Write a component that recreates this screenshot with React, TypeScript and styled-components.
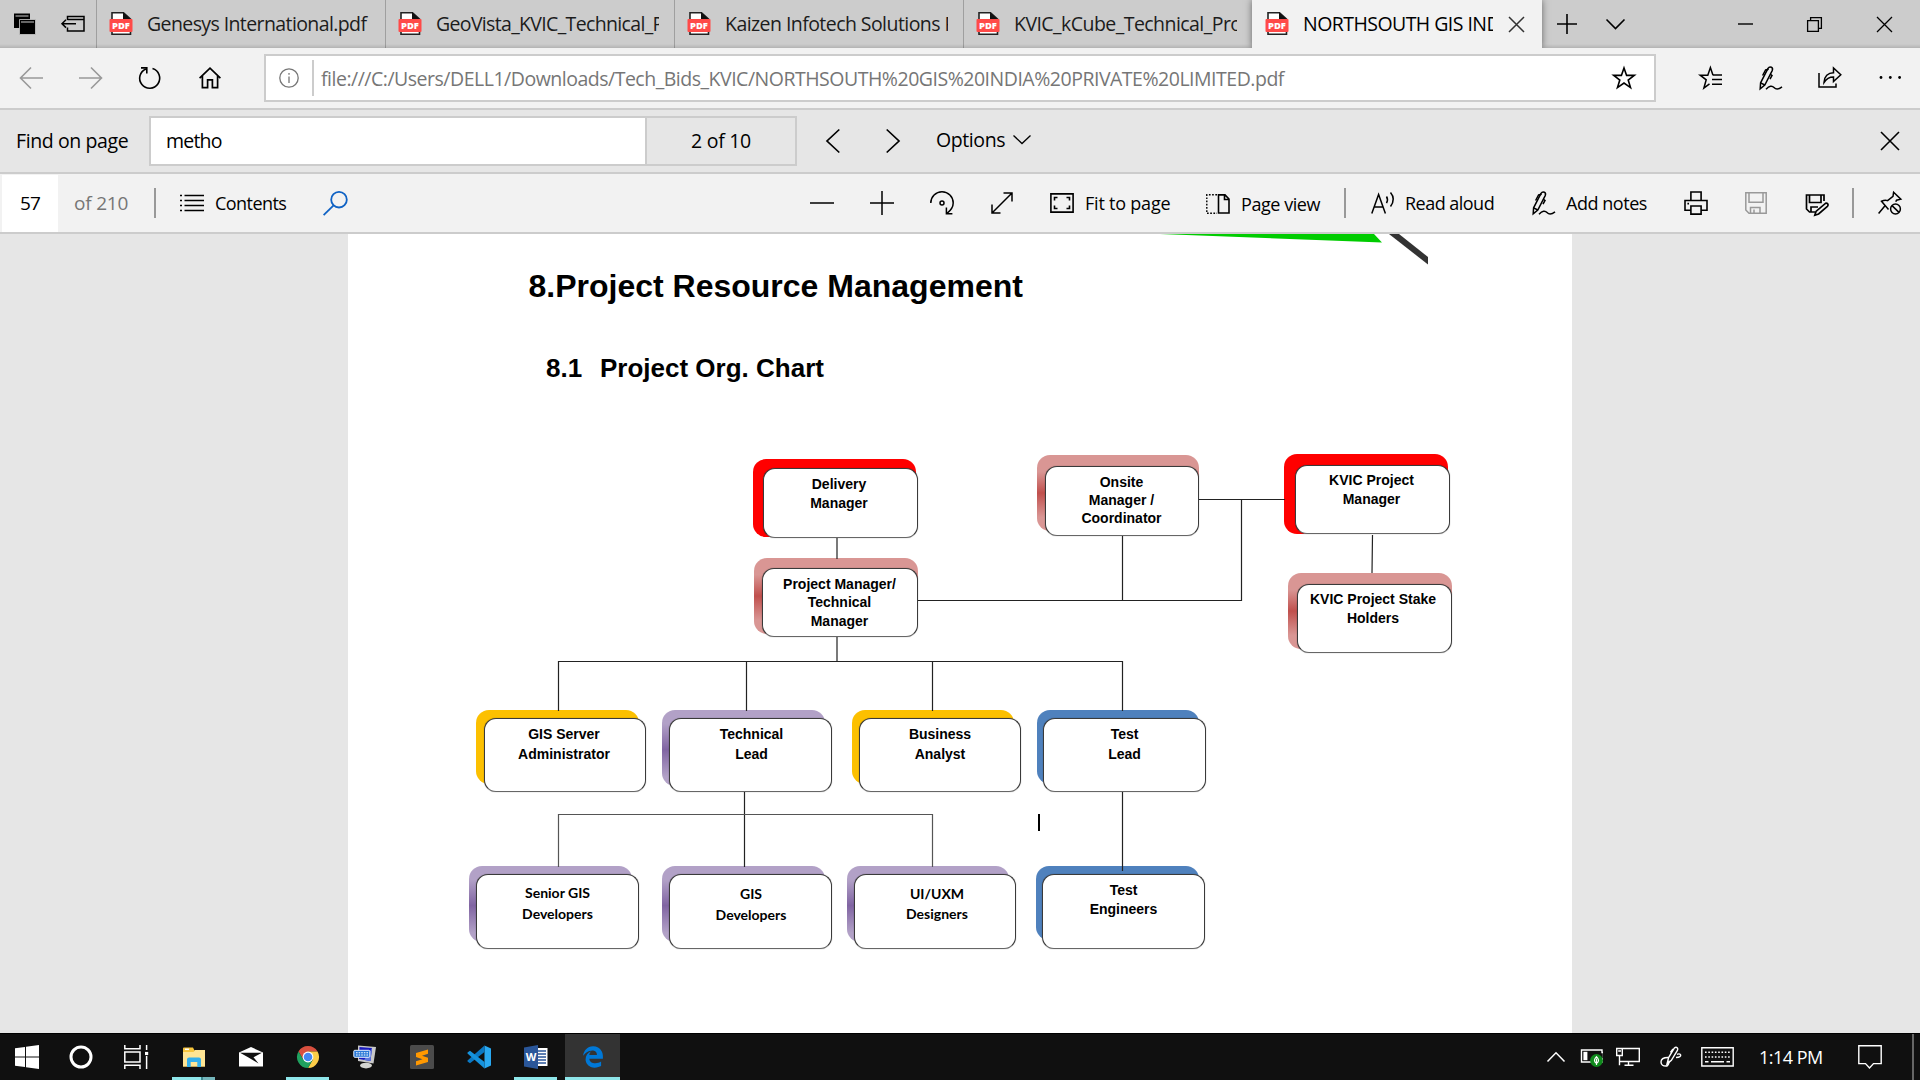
import React from 'react';
import styled, { createGlobalStyle, css } from 'styled-components';
import { FaEdgeLegacy } from 'react-icons/fa6';

const UI_FONT = '"Open Sans", "Noto Sans", sans-serif';
const DOC_FONT = '"Liberation Sans", Arial, sans-serif';

const GlobalStyle = createGlobalStyle`
  * { box-sizing: border-box; }
  body { margin: 0; background: #e6e6e6; overflow: hidden; }
  svg { display: block; flex: none; }
`;

const Screen = styled.div`
  width: 1920px;
  height: 1080px;
  display: flex;
  flex-direction: column;
  overflow: hidden;
  font-family: ${UI_FONT};
  color: #000;
  white-space: nowrap;
`;

/* ---------- shared pieces ---------- */

const Cell = styled.div<{ $w: number }>`
  width: ${(p) => p.$w}px;
  flex: none;
  height: 100%;
  display: flex;
  align-items: center;
  justify-content: center;
`;

const Spacer = styled.div`
  flex: 1;
`;

const Stroke = styled.svg<{ $c?: string; $sw?: number }>`
  fill: none;
  stroke: ${(p) => p.$c ?? '#000'};
  stroke-width: ${(p) => p.$sw ?? 1.5};
  overflow: visible;
`;

const VLine = styled.div<{ $h: number; $c: string; $ml?: number; $mr?: number }>`
  width: 2px;
  flex: none;
  height: ${(p) => p.$h}px;
  background: ${(p) => p.$c};
  margin-left: ${(p) => p.$ml ?? 0}px;
  margin-right: ${(p) => p.$mr ?? 0}px;
`;

/* ---------- tab strip ---------- */

const TabStrip = styled.div`
  height: 48px;
  flex: none;
  display: flex;
  background: #ccc;
`;

const Tab = styled.div<{ $active?: boolean }>`
  width: 289px;
  flex: none;
  display: flex;
  align-items: center;
  padding: 0 15px 0 12px;
  border-left: 1px solid #9f9f9f;
  ${(p) =>
    p.$active &&
    css`
      width: 290px;
      border-left-color: #f2f2f2;
      background: #f2f2f2;
      box-shadow: 0 0 7px rgba(0, 0, 0, 0.5);
      z-index: 1;
    `}
`;

const TabTitle = styled.span<{ $ls: number; $active?: boolean }>`
  margin-left: 14px;
  flex: 1;
  min-width: 0;
  overflow: hidden;
  font-size: 19.5px;
  line-height: 47px;
  height: 48px;
  letter-spacing: ${(p) => p.$ls}px;
  color: ${(p) => (p.$active ? '#000' : '#1c1c1c')};
`;

const TabClose = styled.div`
  width: 35px;
  margin-right: -1px;
  padding-left: 16px;
`;

/* ---------- navigation bar ---------- */

const NavBar = styled.div`
  height: 62px;
  flex: none;
  display: flex;
  align-items: center;
  padding-left: 1px;
  background: #f2f2f2;
  border-bottom: 2px solid #ccc;
  position: relative;
  z-index: 2;
`;

const StripShade = styled.div`
  height: 4px;
  margin-top: -4px;
  flex: none;
  background: linear-gradient(rgba(0, 0, 0, 0), rgba(0, 0, 0, 0.12));
`;

const Address = styled.div`
  width: 1392px;
  height: 48px;
  margin-left: 24px;
  flex: none;
  display: flex;
  align-items: center;
  background: #fff;
  border: 2px solid #ccc;
`;

const Url = styled.span`
  flex: 1;
  margin-left: 7px;
  font-size: 19.5px;
  letter-spacing: -0.49px;
  line-height: 45px;
  color: #767676;
`;

/* ---------- find bar ---------- */

const FindBar = styled.div`
  height: 64px;
  flex: none;
  display: flex;
  align-items: center;
  background: #e6e6e6;
  border-bottom: 2px solid #ccc;
  font-size: 19.5px;
  letter-spacing: -0.4px;
`;

const FindLabel = styled.span`
  width: 149px;
  padding: 0 0 1px 16px;
`;

const FindInput = styled.div`
  width: 498px;
  height: 50px;
  padding-left: 15px;
  line-height: 46px;
  letter-spacing: -0.8px;
  background: #fff;
  border: 2px solid #ccc;
`;

const FindCount = styled.div`
  width: 150px;
  height: 50px;
  line-height: 46px;
  text-align: center;
  letter-spacing: -0.3px;
  border: 2px solid #ccc;
  border-left: none;
`;

const FindOptions = styled.div`
  display: flex;
  align-items: center;
  gap: 8px;
  margin-left: 18px;
  padding-bottom: 4px;
`;

/* ---------- document toolbar ---------- */

const ToolBar = styled.div`
  height: 60px;
  flex: none;
  display: flex;
  align-items: center;
  background: #f2f2f2;
  border-bottom: 2px solid #ccc;
`;

const PageBox = styled.div`
  width: 56px;
  height: 57px;
  margin: 1px 0 0 2px;
  text-align: center;
  line-height: 57px;
  font-size: 19px;
  letter-spacing: -0.8px;
  background: #fff;
`;

const PageTotal = styled.span`
  width: 80px;
  margin-left: 16px;
  font-size: 19px;
  letter-spacing: -0.2px;
  color: #767676;
`;

const Tool = styled.div<{ $w: number; $pad?: number; $gap?: number; $ls?: number; $drop?: number }>`
  width: ${(p) => p.$w}px;
  padding-left: ${(p) => p.$pad ?? 0}px;
  padding-top: ${(p) => p.$drop ?? 0}px;
  flex: none;
  display: flex;
  align-items: center;
  gap: ${(p) => p.$gap ?? 11}px;
  font-size: 18px;
  letter-spacing: ${(p) => p.$ls ?? -0.45}px;
`;

/* ---------- document ---------- */

const Viewport = styled.div`
  flex: 1;
  min-height: 0;
  overflow: hidden;
  display: flex;
  padding-left: 348px;
  background: #e6e6e6;
`;

const Sheet = styled.div`
  position: relative;
  width: 1224px;
  height: 800px;
  padding-top: 32px;
  background: #fff;
  font-family: ${DOC_FONT};
`;

const Letterhead = styled.svg`
  position: absolute;
  left: 800px;
  top: 0;
`;

const H1 = styled.h1`
  margin: 0 0 46px 180.5px;
  font-size: 32px;
  line-height: 40px;
  font-weight: bold;
`;

const H2 = styled.h2`
  margin: 0 0 36px 198px;
  display: flex;
  font-size: 26px;
  line-height: 32px;
  font-weight: bold;
`;

const H2Number = styled.span`
  width: 54px;
`;

/* Org chart canvas; node and connector coordinates share the window's origin. */
const OX = 348;
const OY = 420;

const Chart = styled.div`
  position: relative;
  width: 1224px;
  height: 613px;
`;

const Connectors = styled.svg`
  position: absolute;
  left: 0;
  top: 0;
  fill: none;
  stroke: #222;
  stroke-width: 1.2;
`;

type Tone = 'red' | 'rose' | 'amber' | 'violet' | 'blue';
const TONES: Record<Tone, string> = {
  red: '#ff0000',
  rose: 'linear-gradient(#d99694 22%, #c0504d 50%, #d99694 82%)',
  amber: '#fcc000',
  violet: 'linear-gradient(#b2a1c7 18%, #8064a2 52%, #b2a1c7 88%)',
  blue: '#4f81bd',
};

const Back = styled.div<{ $x: number; $y: number; $w: number; $h: number; $tone: Tone }>`
  position: absolute;
  left: ${(p) => p.$x - OX}px;
  top: ${(p) => p.$y - OY}px;
  width: ${(p) => p.$w}px;
  height: ${(p) => p.$h}px;
  border-radius: 13px;
  background: ${(p) => TONES[p.$tone]};
`;

const Front = styled.div<{ $x: number; $y: number; $w: number; $h: number }>`
  position: absolute;
  left: ${(p) => p.$x - OX}px;
  top: ${(p) => p.$y - OY}px;
  width: ${(p) => p.$w}px;
  height: ${(p) => p.$h}px;
  border-radius: 12px;
  border: 1px solid #3a3a3a;
  border-bottom-color: #666;
  background: #fff;
  box-shadow: 0 0 1px rgba(0, 0, 0, 0.5);
`;

const Label = styled.div<{ $cx: number; $base: number; $lh: number; $humanist?: boolean }>`
  position: absolute;
  left: ${(p) => p.$cx - OX - 80}px;
  top: ${(p) => p.$base - OY - p.$lh / 2 - 5}px;
  width: 160px;
  text-align: center;
  font-weight: bold;
  font-size: 14px;
  line-height: ${(p) => p.$lh}px;
  ${(p) =>
    p.$humanist &&
    css`
      font-family: Lato, "Open Sans", sans-serif;
    `}
`;

const Caret = styled.div`
  position: absolute;
  left: ${1038 - OX}px;
  top: ${814 - OY}px;
  width: 2px;
  height: 17px;
  background: #000;
`;

interface OrgNode {
  tone: Tone;
  back: [number, number, number, number];
  front: [number, number, number, number];
  cx: number;
  base: number;
  lh: number;
  lines: string[];
  humanist?: boolean;
}

const NODES: OrgNode[] = [
  { tone: 'red', back: [753, 459, 163, 78], front: [763, 468, 155, 70], cx: 839, base: 489.5, lh: 19.2, lines: ['Delivery', 'Manager'] },
  { tone: 'rose', back: [754, 558, 164, 76], front: [762, 568, 156, 69], cx: 839.5, base: 589, lh: 18.4, lines: ['Project Manager/', 'Technical', 'Manager'] },
  { tone: 'rose', back: [1037, 455, 162, 76], front: [1045, 466, 154, 70], cx: 1121.5, base: 488, lh: 17.7, lines: ['Onsite', 'Manager /', 'Coordinator'] },
  { tone: 'red', back: [1284, 454, 164, 80], front: [1295, 465, 155, 69], cx: 1371.5, base: 485.5, lh: 19.7, lines: ['KVIC Project', 'Manager'] },
  { tone: 'rose', back: [1288, 573, 164, 76], front: [1297, 584, 155, 69], cx: 1373, base: 604.5, lh: 18.3, lines: ['KVIC Project Stake', 'Holders'] },
  { tone: 'amber', back: [476, 710, 163, 74], front: [484, 718, 162, 74], cx: 564, base: 739, lh: 20.3, lines: ['GIS Server', 'Administrator'] },
  { tone: 'violet', back: [662, 710, 163, 76], front: [669, 718, 163, 74], cx: 751.5, base: 739, lh: 20.3, lines: ['Technical', 'Lead'] },
  { tone: 'amber', back: [852, 710, 162, 74], front: [859, 718, 162, 74], cx: 940, base: 739, lh: 20.3, lines: ['Business', 'Analyst'] },
  { tone: 'blue', back: [1037, 710, 162, 74], front: [1043, 718, 163, 74], cx: 1124.5, base: 739, lh: 20.3, lines: ['Test', 'Lead'] },
  { tone: 'violet', back: [469, 866, 163, 76], front: [476, 874, 163, 75], cx: 557.5, base: 898.5, lh: 20.3, lines: ['Senior GIS', 'Developers'], humanist: true },
  { tone: 'violet', back: [662, 866, 163, 76], front: [669, 874, 163, 75], cx: 751, base: 898, lh: 21, lines: ['GIS', 'Developers'], humanist: true },
  { tone: 'violet', back: [847, 866, 162, 76], front: [854, 874, 162, 75], cx: 937, base: 898.5, lh: 20, lines: ['UI/UXM', 'Designers'], humanist: true },
  { tone: 'blue', back: [1036, 866, 163, 74], front: [1042, 874, 163, 75], cx: 1123.5, base: 895.8, lh: 19.3, lines: ['Test', 'Engineers'] },
];

/* ---------- taskbar ---------- */

const TaskBar = styled.div`
  height: 47px;
  flex: none;
  display: flex;
  align-items: center;
  background: #101010;
  border-top: 1px solid #000;
`;

const AppCell = styled.div<{ $open?: boolean; $active?: boolean; $stack?: boolean }>`
  width: 57px;
  height: 46px;
  flex: none;
  display: flex;
  flex-direction: column;
  align-items: center;
  justify-content: center;
  padding-top: 3px;
  &::after {
    content: '';
    width: ${(p) => (p.$active ? 55 : 43)}px;
    height: 3px;
    margin-top: auto;
    background: ${(p) =>
      p.$stack
        ? 'linear-gradient(90deg, #8ee6ea 29px, #3f8a90 29px, #3f8a90 31px, #74b6bb 31px)'
        : p.$open || p.$active
          ? '#8ee6ea'
          : 'transparent'};
  }
  & > svg {
    margin-top: auto;
  }
  ${(p) =>
    p.$active &&
    css`
      width: 55px;
      margin-left: 1px;
      background: #333;
    `}
`;

const Tray = styled.div`
  display: flex;
  align-items: center;
  height: 100%;
`;

const Clock = styled.span`
  width: 64px;
  margin: 0 35px 0 25px;
  font-size: 18px;
  letter-spacing: -0.5px;
  color: #fff;
`;

/* ---------- icons ---------- */

const PdfIcon = () => (
  <svg width="24" height="26" viewBox="0 0 24 26">
    <path d="M3 1.7H14.5L21.5 8V23.3H3Z" fill="#fff" stroke="#222" strokeWidth="1.6" />
    <path d="M14 1V8.5H22Z" fill="#111" />
    <rect x="0.5" y="8" width="23" height="13" rx="1" fill="#ff4a48" />
    <text x="12" y="18.2" textAnchor="middle" fontFamily="Open Sans, sans-serif" fontWeight="800" fontSize="9.4" fill="#fff">PDF</text>
  </svg>
);

const CloseIcon = ({ s, w = 1.4, c = '#000' }: { s: number; w?: number; c?: string }) => (
  <Stroke width={s} height={s} viewBox={`0 0 ${s} ${s}`} $sw={w} $c={c}>
    <path d={`M0 0L${s} ${s}M${s} 0L0 ${s}`} />
  </Stroke>
);

const ArrowIcon = ({ flip }: { flip?: boolean }) => (
  <Stroke width="23" height="22" viewBox="0 0 23 22" $c="#999" $sw={1.6}>
    {flip ? <path d="M0 11H22.5M12 0.5L22.5 11L12 21.5" /> : <path d="M23 11H0.5M11 0.5L0.5 11L11 21.5" />}
  </Stroke>
);

const PenIcon = ({ c }: { c?: string }) => (
  <Stroke width="24" height="24" viewBox="0 0 24 24" $c={c}>
    <path d="M1.2 22.8L1.6 16.8L9 2.4Q10.3 0.3 12.3 1.2Q14.2 2.4 13.2 4.6L5.8 19Z" />
    <path d="M1.6 16.8L5.8 19M3.6 9.5L6.6 4L9.6 3.2M11.4 8.4L13 9.4L11 13.2" />
    <path d="M7 23.2Q12 18.2 15 21.5T23 20.8" />
  </Stroke>
);

const ChevronIcon = ({ w, h, d, c = '#000', sw = 1.5 }: { w: number; h: number; d: string; c?: string; sw?: number }) => (
  <Stroke width={w} height={h} viewBox={`0 0 ${w} ${h}`} $c={c} $sw={sw}>
    <path d={d} />
  </Stroke>
);

const TABS = [
  { title: 'Genesys International.pdf', ls: -0.6 },
  { title: 'GeoVista_KVIC_Technical_P', ls: -0.66 },
  { title: 'Kaizen Infotech Solutions P', ls: -0.56 },
  { title: 'KVIC_kCube_Technical_Pro', ls: -0.55 },
];

export default function App() {
  return (
    <Screen>
      <GlobalStyle />

      <TabStrip>
        <Cell $w={50}>
          <svg width="22" height="22" viewBox="0 0 22 22">
            <path d="M0 0.5H16V15H0Z" fill="#000" />
            <path d="M1.5 3H14.5" stroke="#ccc" />
            <path d="M5.5 6.5H21.5V21.5H5.5Z" fill="#000" stroke="#ccc" strokeWidth="0.8" />
            <path d="M7 9H20" stroke="#ccc" />
          </svg>
        </Cell>
        <Cell $w={46}>
          <Stroke width="24" height="18" viewBox="0 0 24 18" $sw={1.5}>
            <path d="M6.5 5V1.5H23V16H6.5V12.5M6.5 4.5H23M1 8.7H15M5 4.8L1 8.7L5 12.6" />
          </Stroke>
        </Cell>
        {TABS.map((t) => (
          <Tab key={t.title}>
            <PdfIcon />
            <TabTitle $ls={t.ls}>{t.title}</TabTitle>
          </Tab>
        ))}
        <Tab $active>
          <PdfIcon />
          <TabTitle $ls={-0.55} $active>NORTHSOUTH GIS IND</TabTitle>
          <TabClose>
            <CloseIcon s={15} w={1.5} c="#333" />
          </TabClose>
        </Tab>
        <Cell $w={50}>
          <Stroke width="20" height="20" viewBox="0 0 20 20" $sw={1.6}><path d="M10 0V20M0 10H20" /></Stroke>
        </Cell>
        <Cell $w={47}>
          <ChevronIcon w={19} h={10} d="M0.5 0.5L9.5 9.5L18.5 0.5" sw={1.6} />
        </Cell>
        <Spacer />
        <Cell $w={69}>
          <Stroke width="15" height="2" viewBox="0 0 15 2" $sw={1.4}><path d="M0 1H15" /></Stroke>
        </Cell>
        <Cell $w={69}>
          <Stroke width="15" height="15" viewBox="0 0 15 15" $sw={1.3}>
            <path d="M0.6 3.6H11.4V14.4H0.6ZM3.6 3.6V0.6H14.4V11.4H11.4" />
          </Stroke>
        </Cell>
        <Cell $w={71}>
          <CloseIcon s={15} w={1.3} />
        </Cell>
      </TabStrip>
      <StripShade />

      <NavBar>
        <Cell $w={60}><ArrowIcon /></Cell>
        <Cell $w={59}><ArrowIcon flip /></Cell>
        <Cell $w={60}>
          <Stroke width="22" height="22" viewBox="0 0 22 22" $sw={1.6}>
            <path d="M13.5 1.6A10 10 0 1 1 7 1.9" />
            <path d="M2 0.9H7.8V6.6" />
          </Stroke>
        </Cell>
        <Cell $w={60}>
          <Stroke width="22" height="22" viewBox="0 0 22 22" $sw={1.7}>
            <path d="M0.6 11.2L11 1.2L21.4 11.2M3.4 9V20.6H8.6V12.8H13.4V20.6H18.6V9" />
          </Stroke>
        </Cell>
        <Address>
          <Cell $w={46}>
            <Stroke width="20" height="20" viewBox="0 0 20 20" $c="#767676" $sw={1.3}>
              <circle cx="10" cy="10" r="9.2" />
              <path d="M10 8.4V15M10 5V6.8" />
            </Stroke>
          </Cell>
          <VLine $h={36} $c="#ccc" />
          <Url>file:///C:/Users/DELL1/Downloads/Tech_Bids_KVIC/NORTHSOUTH%20GIS%20INDIA%20PRIVATE%20LIMITED.pdf</Url>
          <Cell $w={60}>
            <Stroke width="24" height="24" viewBox="0 0 24 24" $sw={1.6}>
              <path d="M12 2L14.6 9.4H22.3L16.2 14L18.5 21.6L12 17L5.5 21.6L7.8 14L1.7 9.4H9.4Z" />
            </Stroke>
          </Cell>
        </Address>
        <Spacer />
        <Cell $w={60}>
          <Stroke width="24" height="24" viewBox="0 0 24 24">
            <path d="M14 9H23M13 13.6H23M13 18.2H23" />
            <path d="M14 9.2L11.4 1.6L8.8 9.2H1.2L7.2 13.8L4.9 22L10.5 17.8" />
          </Stroke>
        </Cell>
        <Cell $w={59}><PenIcon /></Cell>
        <Cell $w={60}>
          <Stroke width="24" height="24" viewBox="0 0 24 24">
            <path d="M1 7V21H18V17.5" />
            <path d="M6 16.5C6.2 10.5 10 6.7 15.5 6.7V2L22.8 8.8L15.5 15.6V11C11 11 8.4 12.6 6 16.5Z" />
          </Stroke>
        </Cell>
        <Cell $w={60}>
          <svg width="23" height="6" viewBox="0 0 23 6">
            <circle cx="2" cy="2.5" r="1.4" /><circle cx="11.3" cy="2.5" r="1.4" /><circle cx="20.6" cy="2.5" r="1.4" />
          </svg>
        </Cell>
      </NavBar>

      <FindBar>
        <FindLabel>Find on page</FindLabel>
        <FindInput>metho</FindInput>
        <FindCount>2 of 10</FindCount>
        <Cell $w={71}><ChevronIcon w={14} h={24} d="M13.3 0.5L1 12L13.3 23.5" sw={1.7} /></Cell>
        <Cell $w={50}><ChevronIcon w={14} h={24} d="M0.7 0.5L13 12L0.7 23.5" sw={1.7} /></Cell>
        <FindOptions>
          Options
          <ChevronIcon w={18} h={9} d="M0.5 0.5L9 8.5L17.5 0.5" sw={1.3} />
        </FindOptions>
        <Spacer />
        <Cell $w={60}><CloseIcon s={18} w={1.6} /></Cell>
      </FindBar>

      <ToolBar>
        <PageBox>57</PageBox>
        <PageTotal>of 210</PageTotal>
        <VLine $h={30} $c="#999" $mr={24} />
        <Tool $w={143} $ls={-0.55}>
          <Stroke width="24" height="18" viewBox="0 0 24 18">
            <path d="M4.5 1.5H24M4.5 6.5H24M4.5 11.5H24M4.5 16.5H24" />
            <path d="M0 1.5H2M0 6.5H2M0 11.5H2M0 16.5H2" />
          </Stroke>
          Contents
        </Tool>
        <Stroke width="25" height="25" viewBox="0 0 25 25" $c="#0f62c4" $sw={1.8}>
          <circle cx="16" cy="8.7" r="7.8" />
          <path d="M10.6 14.3L0.6 24.2" />
        </Stroke>
        <Spacer />
        <Cell $w={60}><Stroke width="24" height="24" viewBox="0 0 24 24"><path d="M0 12H24" /></Stroke></Cell>
        <Cell $w={60}><Stroke width="24" height="24" viewBox="0 0 24 24"><path d="M0 12H24M12 0V24" /></Stroke></Cell>
        <Cell $w={60}>
          <Stroke width="24" height="24" viewBox="0 0 24 24">
            <path d="M0.8 12A11.2 11.2 0 0 1 23.2 12C23.2 16.5 20.5 19.6 17 22.4M16.4 16.4V22.8H22.4" />
            <circle cx="12" cy="12" r="2" />
          </Stroke>
        </Cell>
        <Cell $w={60}>
          <Stroke width="22" height="22" viewBox="0 0 22 22">
            <path d="M1 21L21 1M12.5 1H21V9.5M1 12.5V21H9.5" />
          </Stroke>
        </Cell>
        <Tool $w={174} $pad={18} $ls={-0.22}>
          <Stroke width="24" height="20" viewBox="0 0 24 20" $sw={1.6}>
            <path d="M0.9 0.9H23.1V19.1H0.9Z" />
            <path d="M4.5 7.5V4.5H7.5M16.5 4.5H19.5V7.5M19.5 12.5V15.5H16.5M7.5 15.5H4.5V12.5" />
          </Stroke>
          Fit to page
        </Tool>
        <Tool $w={138} $drop={2}>
          <Stroke width="24" height="20" viewBox="0 0 24 20" $sw={1.6}>
            <path d="M12.5 0.9H19L23 5V19H12.5ZM18.5 1V5.5H23" />
            <path d="M11 0.8H0.8V19.2H11" strokeDasharray="1.7 1.5" strokeWidth="1.4" />
          </Stroke>
          Page view
        </Tool>
        <VLine $h={30} $c="#999" $mr={25} />
        <Tool $w={161} $gap={10} $ls={-0.52}>
          <Stroke width="24" height="24" viewBox="0 0 24 24">
            <path d="M0.8 22.5L7.6 3.5L14.4 22.5M3.2 16H12" />
            <path d="M15.5 5.5Q17.5 8.8 15.5 12.2M19.5 1.5Q25 8 19.5 15.5" />
          </Stroke>
          Read aloud
        </Tool>
        <Tool $w={134} $gap={10}>
          <PenIcon />
          Add notes
        </Tool>
        <Cell $w={60}>
          <Stroke width="24" height="24" viewBox="0 0 24 24" $sw={1.6}>
            <path d="M6.9 9.5V1H17.1V9.5M6.9 19.3H1V9.5H23V19.3H17.1M6.9 15H17.1V23.1H6.9ZM3.4 12.6H5" />
          </Stroke>
        </Cell>
        <Cell $w={60}>
          <Stroke width="22" height="22" viewBox="0 0 22 22" $c="#999">
            <path d="M0.8 0.8H21.2V21.2H4L0.8 18ZM4 1V10.3H18V1M5.5 21V15.5H15V21M9 17.5V21" />
          </Stroke>
        </Cell>
        <Cell $w={61}>
          <Stroke width="24" height="24" viewBox="0 0 24 24" $sw={1.7}>
            <path d="M19 10V4H1.5V18L4.5 21H10M4.5 4V11.5H16V4M6 21V16H13" />
            <path d="M9.8 24.2L11 20.4L20.4 12.4Q22.4 11.8 23 13.4Q23.2 14.6 22.4 15.4L13.6 23Z" />
          </Stroke>
        </Cell>
        <VLine $h={30} $c="#999" $ml={5} $mr={6} />
        <Cell $w={60}>
          <Stroke width="24" height="24" viewBox="0 0 24 24">
            <path d="M10.5 18.5L3.5 10.2Q7 8.6 9.6 9.6L15 5.4L15.6 1.2L22.8 8.2L18.5 9.2L17.8 10.8M7.2 14.6L0.6 22.6" />
            <circle cx="17.5" cy="18" r="4.9" />
            <path d="M14 14.6L21 21.4" />
          </Stroke>
        </Cell>
      </ToolBar>

      <Viewport>
        <Sheet>
          <Letterhead width="300" height="32" viewBox="0 0 300 32">
            <path d="M12 0H226L234 8.5Z" fill="#00cc00" />
            <path d="M241 0H251L280 23V30.5Z" fill="#333" />
          </Letterhead>
          <H1>8.Project Resource Management</H1>
          <H2>
            <H2Number>8.1</H2Number>
            Project Org. Chart
          </H2>
          <Chart>
            {NODES.map((n) => {
              const [bx, by, bw, bh] = n.back;
              return <Back key={bx + '-' + by} $x={bx} $y={by} $w={bw} $h={bh} $tone={n.tone} />;
            })}
            <Connectors width="1224" height="613" viewBox={`${OX} ${OY} 1224 613`}>
              <path d="M837 537V559M837 637V661M558.5 711V661.5H1122.5V711M746.5 661V711M932.5 661V711" />
              <path d="M918 600.5H1241.5V499.5M1198 499.5H1285M1122.5 533V600M1372.5 535L1372 573" />
              <path d="M744.5 791V867M1122.5 791V871" />
              <path d="M558.5 867V814.5H932.5V867" stroke="#555" />
            </Connectors>
            {NODES.map((n) => {
              const [fx, fy, fw, fh] = n.front;
              return <Front key={fx + '-' + fy} $x={fx} $y={fy} $w={fw} $h={fh} />;
            })}
            {NODES.map((n) => (
              <Label key={n.cx + '-' + n.base} $cx={n.cx} $base={n.base} $lh={n.lh} $humanist={n.humanist}>
                {n.lines.map((l) => (
                  <div key={l}>{l}</div>
                ))}
              </Label>
            ))}
            <Caret />
          </Chart>
        </Sheet>
      </Viewport>

      <TaskBar>
        <Cell $w={54}>
          <svg width="24" height="24" viewBox="0 0 24 24" fill="#fff">
            <path d="M0 3.3L10 1.9V11.4H0ZM11 1.7L24 0V11.4H11ZM0 12.5H10V22L0 20.7ZM11 12.5H24V24L11 22.3Z" />
          </svg>
        </Cell>
        <Cell $w={54}>
          <Stroke width="24" height="24" viewBox="0 0 24 24" $c="#fff" $sw={3}><circle cx="12" cy="12" r="10" /></Stroke>
        </Cell>
        <Cell $w={57}>
          <Stroke width="26" height="24" viewBox="0 0 26 24" $c="#fff">
            <path d="M0.8 0V3.8H16V0M0.8 7H16V17H0.8ZM0.8 24V20.2H16V24M22.6 0V5M22.6 11V24" />
            <path d="M21 8.5H24.2" strokeWidth="3.2" />
          </Stroke>
        </Cell>
        <AppCell $stack>
          <svg width="24" height="24" viewBox="0 0 24 24">
            <path d="M1 3.5Q1 2.5 2 2.5H11L12.5 5.5H23V21.5H1Z" fill="#f8c63c" />
            <path d="M3 4.3H7" stroke="#fff" strokeWidth="1.5" />
            <path d="M1 7H11.5L13 5H23V21.5H1Z" fill="#ffe594" />
            <path d="M5 22V14.5Q5 12.5 7 12.5H17Q19 12.5 19 14.5V22H15.3V17H8.7V22Z" fill="#35b0ec" />
          </svg>
        </AppCell>
        <AppCell>
          <svg width="24" height="24" viewBox="0 0 24 24">
            <path d="M0 7.5L12 2L24 7.5V21.5H0Z" fill="#fff" />
            <path d="M1 7.8H23L14.5 12.2L19.5 18.5L9.5 12.5Z" fill="#101010" />
          </svg>
        </AppCell>
        <AppCell $open>
          <svg width="24" height="24" viewBox="0 0 24 24">
            <path d="M2.47 6.5A11 11 0 0 1 21.53 6.5H12L7.2 14.5Z" fill="#d9503f" />
            <path d="M21.53 6.5A11 11 0 0 1 12 23L16.8 14.5L12 6.5Z" fill="#fccd48" />
            <path d="M12 23A11 11 0 0 1 2.47 6.5L7.2 14.5H16.8Z" fill="#1fa15f" />
            <circle cx="12" cy="12" r="5.4" fill="#fff" />
            <circle cx="12" cy="12" r="4.3" fill="#4587f3" />
          </svg>
        </AppCell>
        <AppCell>
          <svg width="24" height="24" viewBox="0 0 24 24">
            <path d="M5 0.5L23 2L20.5 18.5L5 16Z" fill="#c8c8c8" />
            <path d="M6.5 2L19 3L17.5 16L6 14Z" fill="#1919bd" />
            <path d="M19 3L17.5 16L11 15Z" fill="#5d78de" />
            <ellipse cx="13" cy="20.6" rx="6" ry="2.8" fill="#d4d4d0" />
            <rect x="0.8" y="5.3" width="16" height="7" rx="1" fill="#2878d8" stroke="#e8f2ff" />
            <path d="M3 7.7H15M3 10H15" stroke="#fff" strokeWidth="1.1" strokeDasharray="1.6 1" />
          </svg>
        </AppCell>
        <AppCell>
          <svg width="24" height="24" viewBox="0 0 24 24">
            <rect width="24" height="24" rx="1.5" fill="#4b4b4b" />
            <path d="M18 4.5V8.7L12 10.7L18 12.7V17L6 20.5V16.3L12.5 14.2L6 12V8Z" fill="#ff9800" />
          </svg>
        </AppCell>
        <AppCell>
          <svg width="24" height="24" viewBox="0 0 24 24">
            <path d="M17.5 0.5L24 3.5V20.5L17.5 23.5Z" fill="#29a9f2" />
            <path d="M17.5 0.5V7L3 18.2L0.5 16.4V15.4Z" fill="#0a78c4" />
            <path d="M17.5 23.5V17L3 5.8L0.5 7.6V8.6Z" fill="#1592dd" />
          </svg>
        </AppCell>
        <AppCell $open>
          <svg width="24" height="24" viewBox="0 0 24 24">
            <path d="M12 3H23.5V21H12Z" fill="#fff" />
            <path d="M14 6H22M14 9H22M14 12H22M14 15H22M14 18H22" stroke="#2a5699" strokeWidth="1.3" />
            <path d="M0 2.5L14 0V24L0 21.5Z" fill="#2a5699" />
            <text x="7" y="16" textAnchor="middle" fontFamily="Open Sans, sans-serif" fontWeight="700" fontSize="11" fill="#fff">W</text>
          </svg>
        </AppCell>
        <AppCell $active>
          <FaEdgeLegacy size={22} color="#0078d7" />
        </AppCell>
        <Spacer />
        <Tray>
          <ChevronIcon w={18} h={10} d="M0.5 9.5L9 0.8L17.5 9.5" c="#fff" />
          <Cell $w={51}>
            <svg width="25" height="20" viewBox="-2 0 25 20">
              <path d="M1.5 3H22V5.5H23.5V12H22V15H1.5Z" fill="none" stroke="#fff" strokeWidth="1.4" />
              <rect x="3.4" y="4.8" width="4" height="8.4" fill="#fff" />
              <circle cx="16.5" cy="13.5" r="6.4" fill="#0f8a1c" />
              <path d="M16.5 9.6Q20.6 13.5 16.5 16.6Q12.4 13.5 16.5 9.6ZM16.5 11.5V18" fill="none" stroke="#fff" strokeWidth="1.2" />
            </svg>
          </Cell>
          <Stroke width="24" height="20" viewBox="0 0 24 20" $c="#fff" $sw={1.4}>
            <path d="M7 1.5H23.3V14.5H3.5M0.7 1.5H6.3V8.5H0.7ZM2.2 4H5M3.5 8.5V18.2M12.5 14.5V18M8.5 18.2H17.5" />
          </Stroke>
          <Cell $w={61}>
            <Stroke width="22" height="22" viewBox="0 0 22 22" $c="#fff" $sw={1.4}>
              <path d="M7 18L8.6 11.6L14.4 2Q16 0.6 17.4 2Q18.2 3 17.4 4.4L11.4 14.4ZM10.5 6.5L13 3" />
              <path d="M8 11.5Q1 11.5 1 16T7 20Q9.5 17.5 8.8 14.6M16 11.5Q21.5 11 20.6 8.8Q19.5 7.2 17 8.4" />
            </Stroke>
          </Cell>
          <Stroke width="33" height="20" viewBox="0 0 33 20" $c="#fff" $sw={1.4}>
            <path d="M0.8 0.8H32.2V19H0.8Z" />
            <path d="M4 5.2H29M4 10H29" strokeDasharray="1.6 1.7" />
            <path d="M4 14.8H7.5M10 14.8H23M25.5 14.8H29" />
          </Stroke>
          <Clock>1:14 PM</Clock>
          <Stroke width="24" height="24" viewBox="0 0 24 24" $c="#fff" $sw={1.4}>
            <path d="M0.8 0.8H23.2V18.6H15.5L11.5 23L7.5 18.6H0.8Z" />
          </Stroke>
          <VLine $h={46} $c="#666" $ml={30} $mr={6} />
        </Tray>
      </TaskBar>
    </Screen>
  );
}
